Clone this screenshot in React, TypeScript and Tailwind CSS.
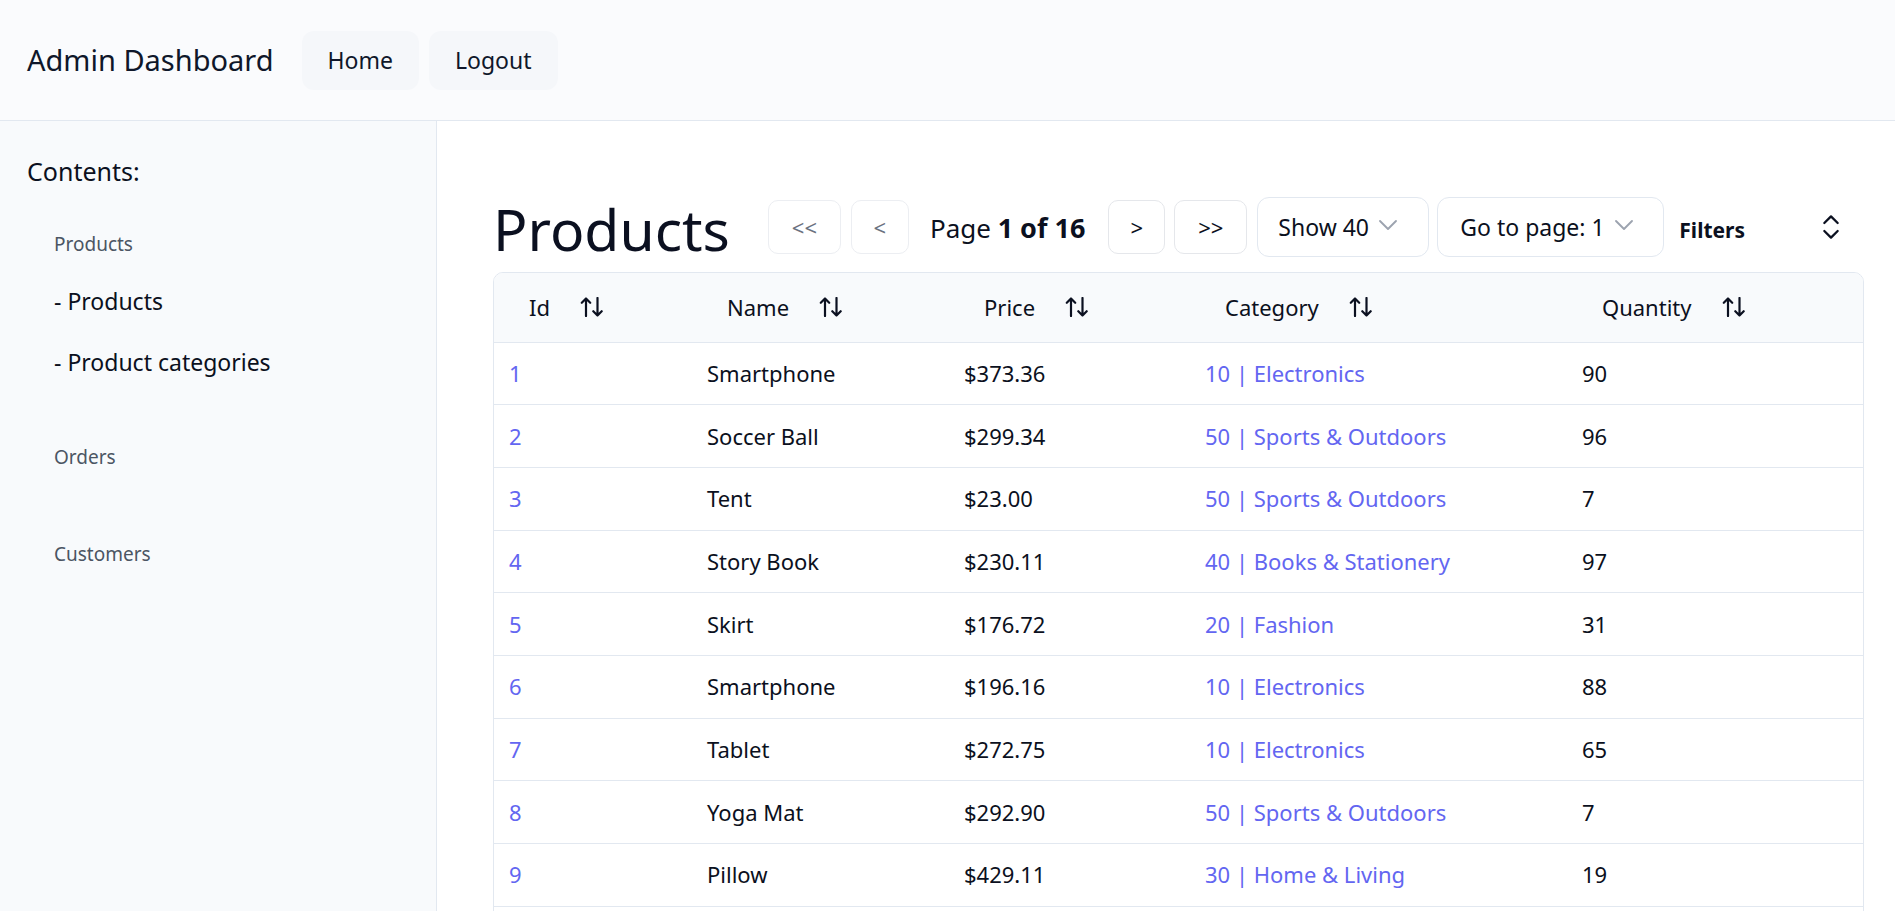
import React from "react";
import { ChevronDown, ChevronsUpDown } from "lucide-react";

const rows: [number, string, string, string, number][] = [
  [1, "Smartphone", "$373.36", "10 | Electronics", 90],
  [2, "Soccer Ball", "$299.34", "50 | Sports & Outdoors", 96],
  [3, "Tent", "$23.00", "50 | Sports & Outdoors", 7],
  [4, "Story Book", "$230.11", "40 | Books & Stationery", 97],
  [5, "Skirt", "$176.72", "20 | Fashion", 31],
  [6, "Smartphone", "$196.16", "10 | Electronics", 88],
  [7, "Tablet", "$272.75", "10 | Electronics", 65],
  [8, "Yoga Mat", "$292.90", "50 | Sports & Outdoors", 7],
  [9, "Pillow", "$429.11", "30 | Home & Living", 19],
  [10, "Headphones", "$145.20", "10 | Electronics", 42],
  [11, "Jacket", "$88.40", "20 | Fashion", 54],
  [12, "Notebook", "$12.99", "40 | Books & Stationery", 73],
];

function SortIcon() {
  return (
    <svg width="24" height="20" viewBox="0 0 24 20" fill="none" stroke="currentColor" strokeWidth="2.2" strokeLinecap="round" strokeLinejoin="round" className="shrink-0">
      <path d="M6 19V1.5M1.8 5.8L6 1.5l4.2 4.3" />
      <path d="M17.5 1v17.5M13.3 14.2l4.2 4.3 4.2-4.3" />
    </svg>
  );
}

function Th({ label }: { label: string }) {
  return (
    <th className="h-[69px] pl-[35px] text-left font-normal">
      <div className="flex items-center gap-[30px]">
        <span>{label}</span>
        <SortIcon />
      </div>
    </th>
  );
}

export default function App() {
  return (
    <div className="min-h-screen flex flex-col bg-white text-[#0b1020]" style={{ fontFamily: '"Noto Sans", "Open Sans", sans-serif' }}>
      <header className="h-[121px] shrink-0 flex items-center px-[27px] bg-[#fafbfd] border-b border-[#e2e8f0]">
        <div className="text-[29px] text-[#0f172a] mr-[28px]">Admin Dashboard</div>
        <button className="h-[59px] px-[26px] rounded-xl bg-[#f5f7fa] text-[23px] text-[#0f172a] mr-[10px]">Home</button>
        <button className="h-[59px] px-[26px] rounded-xl bg-[#f5f7fa] text-[23px] text-[#0f172a]">Logout</button>
      </header>
      <div className="flex flex-1">
        <aside className="w-[437px] shrink-0 bg-[#f8fafc] border-r border-[#e2e8f0] pt-[33px] px-[27px]">
          <div className="text-[25px] leading-[34px]">Contents:</div>
          <div className="pl-[27px]">
            <div className="mt-[42px] text-[19px] leading-[28px] text-[#4b5563]">Products</div>
            <div className="mt-[27px] text-[23px] leading-[32px]">- Products</div>
            <div className="mt-[29px] text-[23px] leading-[32px]">- Product categories</div>
            <div className="mt-[65px] text-[19px] leading-[28px] text-[#4b5563]">Orders</div>
            <div className="mt-[69px] text-[19px] leading-[28px] text-[#4b5563]">Customers</div>
          </div>
        </aside>
        <main className="flex-1 pl-[56px] pr-[31px] pt-[76px] pb-10">
          <div className="flex items-center h-[60px]">
            <h1 className="text-[57px] leading-none text-[#0b1020] mr-[38px] mt-[4px]">Products</h1>
            <button className="w-[73px] h-[54px] rounded-[10px] border border-[#eceef2] bg-white text-[22px] text-[#6b7280] mr-[10px]">&lt;&lt;</button>
            <button className="w-[58px] h-[54px] rounded-[10px] border border-[#eceef2] bg-white text-[22px] text-[#6b7280] mr-[21px]">&lt;</button>
            <div className="text-[26px] mr-[23px] whitespace-nowrap mt-[2px]">
              Page <span className="font-bold text-[27px]">1 of 16</span>
            </div>
            <button className="w-[57px] h-[54px] rounded-[10px] border border-[#e5e7eb] bg-white text-[22px] text-[#0b1020] mr-[9px]">&gt;</button>
            <button className="w-[73px] h-[54px] rounded-[10px] border border-[#e5e7eb] bg-white text-[22px] text-[#0b1020] mr-[10px]">&gt;&gt;</button>
            <div className="w-[172px] h-[60px] rounded-[12px] border border-[#e2e8f0] bg-white flex items-center pl-[20px] pr-[24px] justify-between text-[23px] mr-[8px]">
              <span>Show 40</span>
              <ChevronDown size={32} strokeWidth={1.4} className="text-[#9ca3af] -mt-1" />
            </div>
            <div className="w-[227px] h-[60px] rounded-[12px] border border-[#e2e8f0] bg-white flex items-center pl-[22px] pr-[23px] justify-between text-[23px] mr-[15px]">
              <span>Go to page: 1</span>
              <ChevronDown size={32} strokeWidth={1.4} className="text-[#9ca3af] -mt-1" />
            </div>
            <div className="w-[168px] flex items-center justify-between">
              <span className="text-[21px] font-bold mt-[8px]">Filters</span>
              <ChevronsUpDown size={32} strokeWidth={1.7} className="text-[#0b1020]" />
            </div>
          </div>
          <div className="mt-[15px] w-[1371px] rounded-[10px] border border-[#e2e8f0] overflow-hidden">
            <table className="w-full table-fixed border-collapse text-[22px]">
              <colgroup>
                <col className="w-[198px]" />
                <col className="w-[257px]" />
                <col className="w-[241px]" />
                <col className="w-[377px]" />
                <col className="w-[298px]" />
              </colgroup>
              <thead className="bg-[#f8fafc]">
                <tr>
                  <Th label="Id" />
                  <Th label="Name" />
                  <Th label="Price" />
                  <Th label="Category" />
                  <Th label="Quantity" />
                </tr>
              </thead>
              <tbody>
                {rows.map((r) => (
                  <tr key={r[0]} className="h-[62.7px] border-t border-[#e2e8f0]">
                    <td className="pl-[15px] text-[#6366f1]">{r[0]}</td>
                    <td className="pl-[15px]">{r[1]}</td>
                    <td className="pl-[15px]">{r[2]}</td>
                    <td className="pl-[15px] text-[#6366f1]">{r[3]}</td>
                    <td className="pl-[15px]">{r[4]}</td>
                  </tr>
                ))}
              </tbody>
            </table>
          </div>
        </main>
      </div>
    </div>
  );
}
